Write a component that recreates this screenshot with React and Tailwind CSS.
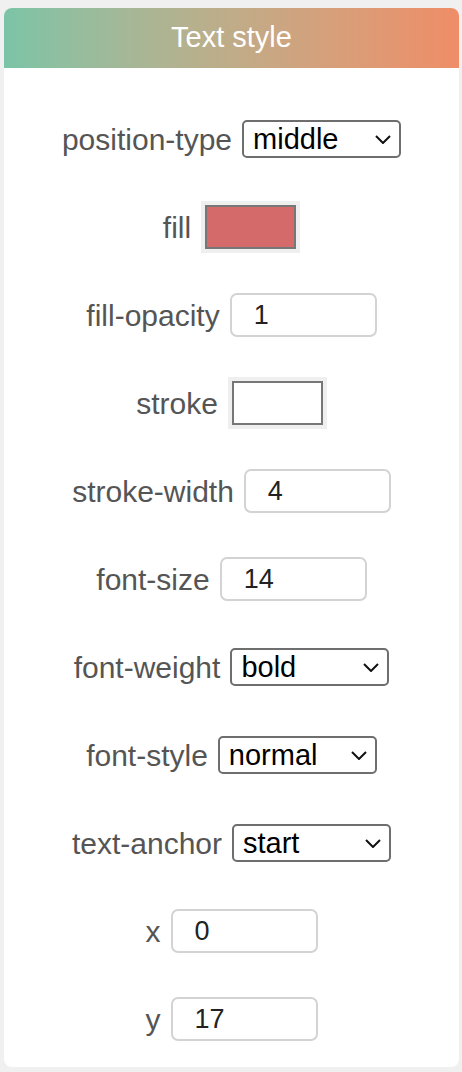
import React from 'react';

const rows = [
  { label: 'position-type', type: 'select', value: 'middle', w: 'w-[159px]' },
  { label: 'fill', type: 'color', value: 'bg-[#d46a6a]' },
  { label: 'fill-opacity', type: 'text', value: '1' },
  { label: 'stroke', type: 'color', value: 'bg-white' },
  { label: 'stroke-width', type: 'text', value: '4' },
  { label: 'font-size', type: 'text', value: '14' },
  { label: 'font-weight', type: 'select', value: 'bold', w: 'w-[159px]' },
  { label: 'font-style', type: 'select', value: 'normal', w: 'w-[159px]' },
  { label: 'text-anchor', type: 'select', value: 'start', w: 'w-[159px]' },
  { label: 'x', type: 'text', value: '0' },
  { label: 'y', type: 'text', value: '17' },
];

function Chevron() {
  return (
    <svg width="16" height="9" viewBox="0 0 16 9" className="shrink-0">
      <path d="M1 1l7 7 7-7" fill="none" stroke="#111" strokeWidth="2" />
    </svg>
  );
}

function Field({ row }) {
  if (row.type === 'select') {
    return (
      <div className={`${row.w} h-[38px] flex items-center justify-between border-2 border-[#6e6e6e] rounded-[5px] pl-[9px] pr-[8px] bg-white`}>
        <span className="text-[29px] text-black leading-none">{row.value}</span>
        <Chevron />
      </div>
    );
  }
  if (row.type === 'color') {
    return (
      <div className="w-[99px] h-[52px] bg-[#efefef] p-[4px] flex">
        <div className={`flex-1 border-2 border-[#777777] ${row.value}`}></div>
      </div>
    );
  }
  return (
    <div className="w-[147px] h-[44px] flex items-center border-2 border-[#d3d3d6] rounded-[7px] pl-[22px] bg-white">
      <span className="text-[27px] text-[#222] leading-none">{row.value}</span>
    </div>
  );
}

export default function App() {
  return (
    <div className="min-h-screen bg-[#f0f0f0] pt-[8px] px-[4px] font-['Liberation_Sans',Arial,sans-serif]">
      <div className="w-[455px] bg-white rounded-[8px] overflow-hidden">
        <div className="h-[60px] flex items-center justify-center bg-gradient-to-r from-[#7bc4a7] to-[#ef8d67]">
          <span className="text-white text-[29px]">Text style</span>
        </div>
        <div className="pt-[27px] pb-[4px]">
          {rows.map((row) => (
            <div key={row.label} className="h-[88px] flex items-center justify-center gap-[10px]">
              <span className="text-[30px] text-[#555]">{row.label}</span>
              <Field row={row} />
            </div>
          ))}
        </div>
      </div>
    </div>
  );
}
